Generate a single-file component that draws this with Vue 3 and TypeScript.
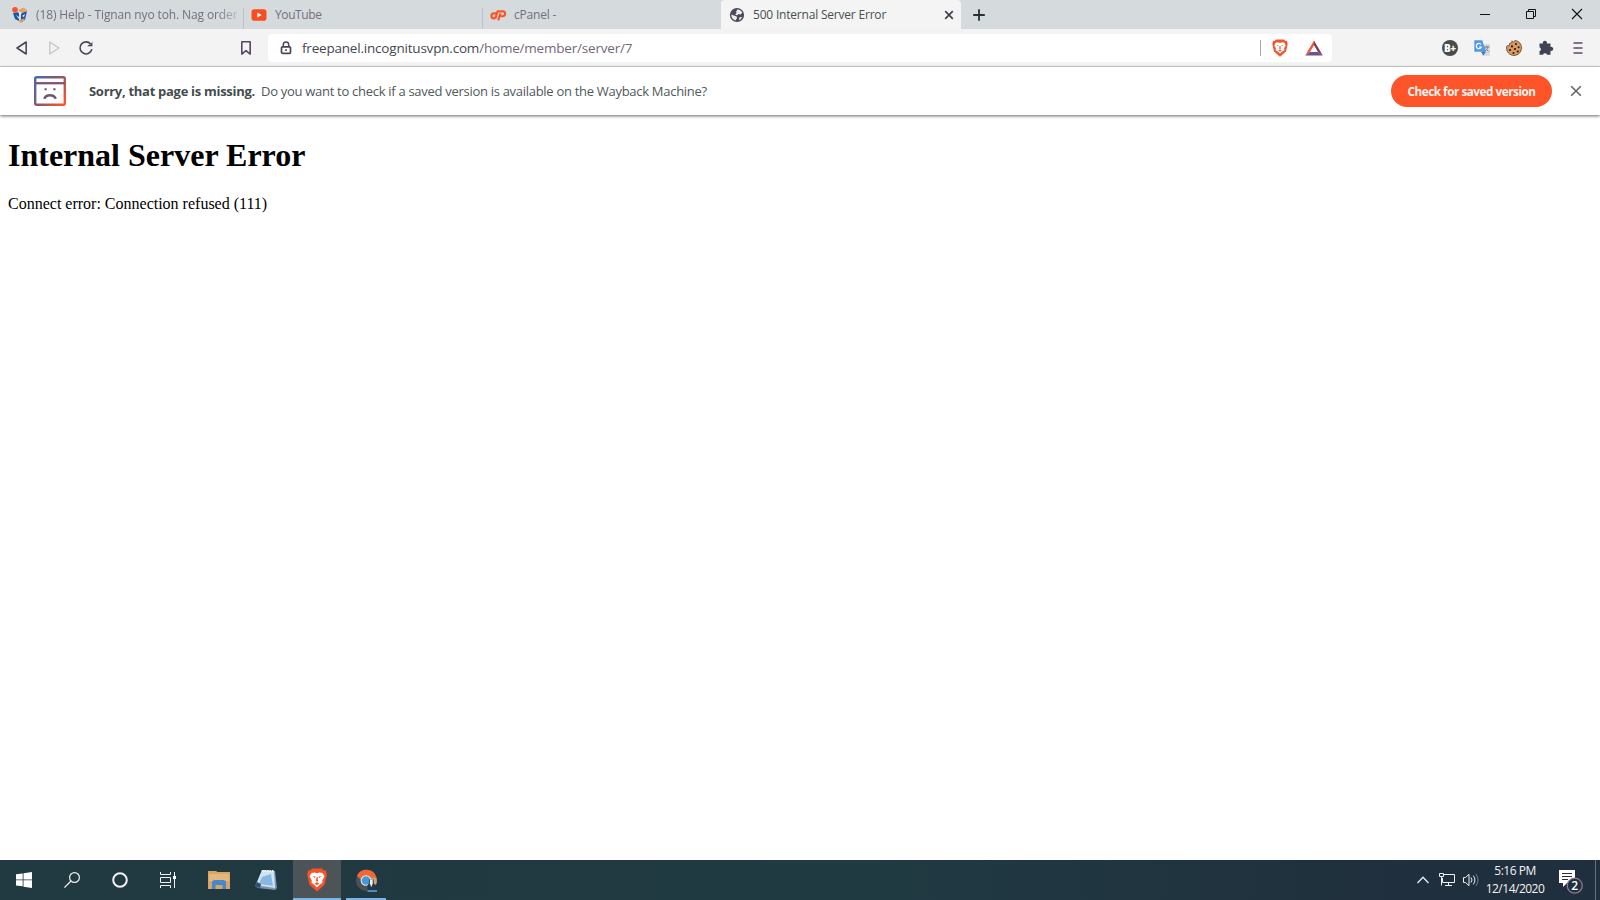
<script setup lang="ts">
import { ref } from "vue";

interface Tab {
    key: string;
    title: string;
    active?: boolean;
}

const tabs = ref<Tab[]>([
    { key: "help", title: "(18) Help - Tignan nyo toh. Nag order" },
    { key: "youtube", title: "YouTube" },
    { key: "cpanel", title: "cPanel -" },
    { key: "error", title: "500 Internal Server Error", active: true },
]);

const host = "freepanel.incognitusvpn.com";
const path = "/home/member/server/7";
</script>

<template>
    <div class="screen">
        <!-- TAB STRIP -->
        <header class="tab-strip">
            <div v-for="tab in tabs" :key="tab.key" class="tab" :class="[tab.key, { active: tab.active }]">
                <svg v-if="tab.key === 'help'" class="favicon" viewBox="0 0 16 16">
                    <path d="M1 6l6-1v9l-4-2zM9 6l6-2-2 9-4 1z" fill="#1c56a8" />
                    <path d="M6 3l6-2.500 3.500 3.500-6 2z" fill="#e9a165" />
                    <path d="M4 8l3 2v2zM10 9l3-2-1 3zM6 5l4 1-2 2z" fill="#f2f5f7" />
                    <path d="M7 13.500l6-2.500-2 4-3 1z" fill="#e39b5e" />
                    <circle cx="3" cy="2.800" r="2.800" fill="#f4552e" />
                </svg>
                <svg v-else-if="tab.key === 'youtube'" class="favicon" viewBox="0 0 16 16">
                    <rect x="0.500" y="2.300" width="15" height="11.400" rx="2.800" fill="#fb4b20" />
                    <path d="M6.400 5.600v4.800L10.600 8z" fill="#fff" />
                </svg>
                <svg v-else-if="tab.key === 'cpanel'" class="favicon" viewBox="0 0 16 16">
                    <path d="M7.200 6.400H3.900a2.500 2.500 0 0 0 0 5h1.300" fill="none" stroke="#fb5526" stroke-width="2.100" />
                    <path d="M5.300 11.600l2.300-7.200h5.100a2.300 2.300 0 0 1 0 4.800h-2.500" fill="none" stroke="#fb5526" stroke-width="2.100" stroke-linejoin="round" />
                    <path d="M8.200 13.300l2.300-7" fill="none" stroke="#fb5526" stroke-width="2.100" />
                </svg>
                <svg v-else class="favicon" viewBox="0 0 16 16">
                    <circle cx="8" cy="8" r="7.100" fill="#51495a" />
                    <path d="M8.500 2.400c2-.2 4 1.300 4.800 3.200l-1.600 2-2.200-.7-1.300 1.400-2-.6 1.300-1.700-.4-1.600zM2.300 7.500l3.200 1.300 2.200.7.3 1.800-1.600 2.200C3.700 12.500 2.200 10.300 2.300 7.500zM10.500 10.300l2.600-.4c-.6 1.600-1.600 2.800-3.200 3.400z" fill="#eeedf0" />
                </svg>
                <span class="tab-title">{{ tab.title }}</span>
                <svg v-if="tab.active" class="tab-close" viewBox="0 0 10 10">
                    <path d="M1.200 1.200l7.600 7.600M8.800 1.200L1.200 8.800" stroke="#444050" stroke-width="1.700" />
                </svg>
            </div>
            <svg class="new-tab" viewBox="0 0 12 12">
                <path d="M6 .2v11.600M.2 6h11.600" stroke="#263238" stroke-width="1.800" />
            </svg>
            <div class="window-controls">
                <svg viewBox="0 0 12 12"><path d="M1 6.500h10" stroke="#111" /></svg>
                <svg viewBox="0 0 12 12">
                    <path d="M1.500 3.500h7v7h-7zM3.500 3.500v-2h7v7h-2" fill="none" stroke="#111" />
                </svg>
                <svg viewBox="0 0 12 12"><path d="M1 1l10 10M11 1L1 11" stroke="#111" stroke-width="1.100" /></svg>
            </div>
        </header>

        <!-- TOOLBAR -->
        <div class="toolbar">
            <div class="nav-buttons">
                <svg viewBox="0 0 16 16">
                    <path d="M12.200 2v12L3 8z" fill="none" stroke="#48434f" stroke-width="1.500" stroke-linejoin="round" />
                </svg>
                <svg viewBox="0 0 16 16">
                    <path d="M3.800 2v12L13 8z" fill="none" stroke="#c4c4c6" stroke-width="1.300" stroke-linejoin="round" />
                </svg>
                <svg viewBox="0 0 16 16">
                    <path d="M12.600 4A6 6 0 1 0 13.900 9.200" fill="none" stroke="#454450" stroke-width="1.600" />
                    <path d="M14.400 1.400v4.900H9.300l1.200-1.300 2.200-.8z" fill="#454450" />
                </svg>
            </div>
            <svg class="bookmark" viewBox="0 0 16 16">
                <path d="M3.800 1.800h8.400v12.300L8 10.700l-4.200 3.400z" fill="none" stroke="#5b466a" stroke-width="1.600" stroke-linejoin="round" />
            </svg>
            <div class="address-bar">
                <svg class="lock" viewBox="0 0 12 14">
                    <path d="M3.300 6V3.700a2.700 2.700 0 0 1 5.400 0V6" fill="none" stroke="#4c4754" stroke-width="1.500" />
                    <rect x="1.500" y="5.800" width="9" height="6.500" rx="1" fill="none" stroke="#4c4754" stroke-width="1.700" />
                    <rect x="5.200" y="8.200" width="1.600" height="1.800" fill="#4c4754" />
                </svg>
                <span class="url">{{ host }}<span class="url-path">{{ path }}</span></span>
                <span class="address-divider"></span>
                <svg class="shield" viewBox="0 0 16 18">
                    <path d="M4 .5h8l1.400 1.400 1.500.1.800 3-1.700 7.500L8 17.700 2 12.500.3 5l.8-3 1.500-.1z" fill="#f2552b" />
                    <path d="M3.600 3.700L6 3.300l2 .7 2-.7 2.400.4 1.300 2.700-1.600 2.800.3 2-2.200 1.400L8 14.500l-2.200-1.900-2.200-1.400.3-2-1.600-2.800z" fill="#fff" />
                    <path d="M4.500 6l2.300.5-.6.8zM11.500 6l-2.300.5.6.8zM7.500 7h1l.3 2.800L8 10.500l-.8-.7zM6 11.800l2-1 2 1-2 .8z" fill="#f2552b" />
                </svg>
                <svg class="bat" viewBox="0 0 18 16">
                    <path d="M9 .4v5.300L5.500 11.800.2 15.500z" fill="#f4552d" />
                    <path d="M9 .4l8.800 15.100-5.300-3.700L9 5.700z" fill="#85395f" />
                    <path d="M.2 15.500l5.300-3.700h7l5.300 3.700z" fill="#6b5488" />
                    <path d="M9 5.300l3.900 6.700H5.100z" fill="#fff" />
                </svg>
            </div>
            <div class="extensions">
                <svg viewBox="0 0 16 16">
                    <circle cx="8" cy="8" r="8" fill="#484c4e" />
                    <text x="2" y="11.600" class="badge-text">B+</text>
                </svg>
                <svg viewBox="0 0 16 16">
                    <path d="M6 4h10v11.800H8z" fill="#d8dadd" />
                    <path d="M.3.300h8l3.600 11.500H.3z" fill="#529be4" />
                    <path d="M7 11.800h5l-2.600 3.800z" fill="#397dc7" />
                    <path d="M7 4.500A2.600 2.600 0 1 0 7.300 7H5" fill="none" stroke="#fff" stroke-width="1.200" />
                    <path d="M10 7h5.200M12.700 5.800V7M14 7c-.5 2-2 3.500-3.500 4.300M11.500 8.500l3 3" fill="none" stroke="#737990" />
                </svg>
                <svg viewBox="0 0 16 16">
                    <path d="M6 .8l1.400 1.400L9 .6c4 .4 6.500 3.300 6.500 7.400A7.500 7.500 0 0 1 .5 8l.3-2 2.500-.6.500-2.200 2-.3z" fill="#d89a60" stroke="#5b4030" stroke-width=".8" />
                    <g fill="#241711">
                        <circle cx="6" cy="6.400" r="1.100" /><circle cx="10" cy="4" r="1" />
                        <circle cx="12.600" cy="7.200" r="1" /><circle cx="9" cy="9" r="1.100" />
                        <circle cx="4" cy="10" r="1.100" /><circle cx="7.500" cy="13" r="1" />
                        <circle cx="11.800" cy="11.500" r="1.100" />
                    </g>
                </svg>
                <svg viewBox="0 0 16 16">
                    <path d="M1.500 3.500h3.400a2.100 2.100 0 1 1 4 0h3.600v3.400a2.100 2.100 0 1 1 0 4v3.900H9a2.100 2.100 0 0 0-4 0H1.500v-3.600a2.100 2.100 0 0 0 0-4z" fill="#3e4552" />
                </svg>
                <svg viewBox="0 0 16 16">
                    <path d="M3.500 3h9M3.500 8h9M3.500 13h9" stroke="#5b4869" stroke-width="1.600" />
                </svg>
            </div>
        </div>

        <!-- WAYBACK BAR -->
        <div class="wayback-bar">
            <svg class="sad-page" viewBox="0 0 32 30">
                <defs>
                    <linearGradient id="sadGradient" x1="0" y1="0" x2="32" y2="24" gradientUnits="userSpaceOnUse">
                        <stop offset="0" stop-color="#3f6fb5" />
                        <stop offset=".5" stop-color="#83596f" />
                        <stop offset="1" stop-color="#fb5529" />
                    </linearGradient>
                </defs>
                <rect x="1.200" y="1.200" width="29.600" height="27.600" rx="1.500" fill="none" stroke="url(#sadGradient)" stroke-width="2.400" />
                <path d="M1 7.200h30" stroke="#7c5578" stroke-width="2.300" />
                <path d="M10.500 13.200h2.200M19.300 13.200h2.200" stroke="#70566d" stroke-width="2" />
                <path d="M10.200 22.800c1.200-2.800 3.300-3.600 5.800-3.600s4.600.8 5.800 3.600" fill="none" stroke="#70566d" stroke-width="2.500" />
            </svg>
            <strong class="wayback-title">Sorry, that page is missing.</strong>
            <span class="wayback-text">Do you want to check if a saved version is available on the Wayback Machine?</span>
            <button class="check-button">Check for saved version</button>
            <svg class="wayback-close" viewBox="0 0 12 12">
                <path d="M1.200 1.200l9.600 9.600M10.800 1.200l-9.600 9.600" stroke="#666569" stroke-width="1.600" />
            </svg>
        </div>

        <!-- PAGE -->
        <main class="page">
            <h1>Internal Server Error</h1>
            <p>Connect error: Connection refused (111)</p>
        </main>

        <!-- TASKBAR -->
        <footer class="taskbar">
            <div class="task start">
                <svg viewBox="0 0 16 16"><path d="M0 2.300l6.700-.9v6H0zM7.500 1.300L16 0v7.400H7.500zM0 8.300h6.700v6L0 13.500zM7.500 8.300H16V16l-8.500-1.300z" fill="#fff" /></svg>
            </div>
            <div class="task">
                <svg viewBox="0 0 16 16">
                    <circle cx="10.500" cy="5.500" r="4.900" fill="none" stroke="#f1eef0" stroke-width="1.200" />
                    <path d="M7 9L.4 15.600" stroke="#f1eef0" stroke-width="1.300" />
                </svg>
            </div>
            <div class="task">
                <svg viewBox="0 0 16 16"><circle cx="8" cy="8" r="6.800" fill="none" stroke="#f4eff5" stroke-width="2" /></svg>
            </div>
            <div class="task">
                <svg viewBox="0 0 16 16">
                    <path d="M.5 0v2.500h10V0M.5 16v-2.500h10V16M.5 5.500h10v5H.5zM14.500 0v16" fill="none" stroke="#eef1f2" />
                    <path d="M13 4h3v3h-3z" fill="#fff" />
                </svg>
            </div>
            <div class="task explorer">
                <svg viewBox="0 0 24 24">
                    <path d="M1 3h8l1.500 1H23v17H1z" fill="#d9a469" />
                    <path d="M2 6h20v7H2z" fill="#e5b77b" />
                    <path d="M5 21v-7.500l2-1.500h10l2 1.500V21h-3.500v-4h-7v4z" fill="#428acb" />
                </svg>
            </div>
            <div class="task notepad">
                <svg viewBox="0 0 24 24">
                    <path d="M8 2l13 1 2 17-2 2-17-2-3-2z" fill="#8194ae" />
                    <path d="M8 2l12 1 1 17L2 17z" fill="#d0e3f2" />
                    <path d="M8 9l9-3 2 12-14-2z" fill="#86b8e1" />
                    <path d="M8 3h12" stroke="#f4f5f5" stroke-width="2" stroke-dasharray="1.500 1" />
                    <path d="M3 14l4 2-1 4-5-2z" fill="#294e77" />
                </svg>
            </div>
            <div class="task brave">
                <svg viewBox="0 0 20 24">
                    <path d="M5 .5h10l1.800 2 2-.2 1 4.200-2.300 10.200-7.500 6.800-7.500-6.800L.2 6.500l1-4.200 2 .2z" fill="#f85227" />
                    <path d="M4.500 5l3-.5L10 5.300l2.500-.8 3 .5 2 3.300-2.200 3.900.2 2.600-2.500 1.800-3 2.900-3-2.900-2.500-1.800.2-2.600-2.200-3.900z" fill="#fff" />
                    <path d="M5.500 8l3.200.7-1 1.300zM14.500 8l-3.200.7 1 1.300zM9.500 9h1l.5 4-1 1-1-1zM7.500 15.700l2.500-1.400 2.500 1.400-2.500 1.200z" fill="#ef542c" />
                </svg>
            </div>
            <div class="task chrome">
                <svg viewBox="0 0 24 24">
                    <circle cx="12" cy="12" r="11" fill="#4c5157" />
                    <path d="M2 7a11 11 0 0 1 20.500 2L12 10.500 7 12z" fill="#f06835" />
                    <path d="M13 9l9.500.2a11 11 0 0 1-6.500 13z" fill="#d2a275" />
                    <circle cx="11.500" cy="12" r="5.600" fill="#e7edf1" />
                    <circle cx="11.500" cy="12" r="4.500" fill="#4497db" />
                    <path d="M13 23v-6l1.500-2v-4h5v4l2.500 2v6z" fill="#25394b" />
                    <path d="M15.500 11h3v4l-1.500 4-1.500-4z" fill="#edf3f4" />
                    <path d="M13 23h10" stroke="#5ab2ec" stroke-width="1.500" />
                </svg>
            </div>
            <div class="tray">
                <svg class="chevron" viewBox="0 0 12 8"><path d="M.5 7L6 1.300 11.500 7" fill="none" stroke="#f0eef1" stroke-width="1.300" /></svg>
                <svg class="network" viewBox="0 0 16 16">
                    <path d="M5 2.500h10.500v8H3.500V6M9.500 10.500v3M6 13.500h7M.5 1.500h4v3h-4zM2.500 4.500v9" fill="none" stroke="#eef0f2" />
                </svg>
                <svg class="volume" viewBox="0 0 17 16">
                    <path d="M.5 5.500h2L6 2.300v11.400L2.500 10.500h-2z" fill="none" stroke="#eef0f2" />
                    <path d="M8 5.500q2 2.500 0 5M10.300 3.700q3.200 4.300 0 8.600" fill="none" stroke="#eef0f2" />
                    <path d="M12.800 2q4.500 6 0 12" fill="none" stroke="#6c7b85" />
                </svg>
                <div class="clock">
                    <span class="time">5:16 PM</span>
                    <span class="date">12/14/2020</span>
                </div>
                <svg class="notifications" viewBox="0 0 26 26">
                    <path d="M1 1h16v13H9l-4 4v-4H1z" fill="#fff" />
                    <path d="M4 4.500h10M4 7.500h10M4 10.500h6" stroke="#20303d" />
                    <circle cx="16.700" cy="16.700" r="7.500" fill="#20303d" stroke="#8b7793" stroke-width="1.300" />
                    <text x="13.300" y="21" class="count">2</text>
                </svg>
                <span class="show-desktop"></span>
            </div>
        </footer>
    </div>
</template>

<style>
body {
    margin: 0;
    overflow: hidden;
}
</style>

<style scoped>
.screen {
    width: 1600px;
    height: 900px;
    display: flex;
    flex-direction: column;
    background: #fff;
    font-family: "Open Sans", "Noto Sans", sans-serif;
}

svg {
    display: block;
    flex: none;
    overflow: visible;
}

.tab-strip {
    height: 29px;
    display: flex;
    flex: none;
    background: #d5dadd;
}

.tab {
    box-sizing: border-box;
    width: 239px;
    height: 29px;
    padding: 0 11px 0 7px;
    display: flex;
    flex: none;
    align-items: center;
    border-right: 1px solid transparent;
    background: linear-gradient(#bcc3c7, #bcc3c7) right 8px / 1px 21px no-repeat border-box;
    color: #746f82;
}

.tab.help {
    width: 244px;
    padding: 0 6px 0 12px;
}

.tab.cpanel {
    width: 238px;
    background: none;
}

.tab.active {
    width: 240px;
    padding: 0 6px 0 8px;
    background: #f4f4f4;
    border-radius: 4px 4px 0 0;
    color: #465052;
}

.favicon {
    width: 16px;
    height: 16px;
}

.tab-title {
    flex: 1;
    margin-left: 8px;
    white-space: nowrap;
    font-size: 12px;
    line-height: 20px;
    letter-spacing: -0.2px;
}

.help .tab-title {
    letter-spacing: -0.12px;
    mask-image: linear-gradient(90deg, #000 90%, rgba(0, 0, 0, 0.3));
}

.youtube .tab-title {
    letter-spacing: -0.4px;
}

.tab-close {
    width: 10px;
    height: 10px;
}

.new-tab {
    width: 12px;
    height: 12px;
    margin: 9px 0 0 12px;
}

.window-controls {
    display: flex;
    gap: 34px;
    margin: 8px 17px 0 auto;
}

.window-controls svg {
    width: 12px;
    height: 12px;
}

.toolbar {
    height: 38px;
    box-sizing: border-box;
    display: flex;
    flex: none;
    align-items: center;
    background: #f3f3f3;
    border-bottom: 1px solid #d3d3d4;
}

.nav-buttons {
    display: flex;
    gap: 16px;
    padding-left: 14px;
}

.nav-buttons svg,
.bookmark,
.extensions svg {
    width: 16px;
    height: 16px;
}

.bookmark {
    margin-left: 144px;
}

.address-bar {
    box-sizing: border-box;
    width: 1064px;
    height: 28px;
    margin-left: 14px;
    padding: 0 9px 0 12px;
    display: flex;
    align-items: center;
    background: #fff;
    border-radius: 4px;
}

.lock {
    width: 12px;
    height: 14px;
}

.url {
    flex: 1;
    margin-left: 10px;
    white-space: nowrap;
    font-size: 13.5px;
    line-height: 20px;
    letter-spacing: -0.2px;
    color: #444850;
}

.url-path {
    color: #74677a;
}

.address-divider {
    width: 1px;
    height: 16px;
    background: #a8a5ac;
}

.shield {
    width: 16px;
    height: 18px;
    margin-left: 11px;
}

.bat {
    width: 18px;
    height: 16px;
    margin-left: 17px;
}

.extensions {
    display: flex;
    gap: 16px;
    margin: 0 14px 0 auto;
}

.badge-text {
    fill: #fff;
    font-size: 10px;
    font-weight: 800;
    letter-spacing: -0.5px;
}

.wayback-bar {
    height: 48px;
    display: flex;
    flex: none;
    align-items: center;
    background: #fff;
    box-shadow: 0 1px 3px #666;
    white-space: nowrap;
    color: #50595b;
    font-size: 13px;
    line-height: 20px;
}

.sad-page {
    width: 32px;
    height: 30px;
    margin-left: 34px;
}

.wayback-title {
    margin-left: 23px;
    width: 172px;
    color: #434c4d;
    letter-spacing: -0.29px;
}

.wayback-text {
    letter-spacing: -0.29px;
}

.check-button {
    width: 161px;
    height: 32px;
    margin-left: auto;
    padding: 0;
    border: 0;
    border-radius: 16px;
    background: #fd5429;
    color: #fff4ed;
    font: 700 11.7px/20px "Open Sans", sans-serif;
    letter-spacing: -0.45px;
}

.wayback-close {
    width: 12px;
    height: 12px;
    margin: 0 18px;
}

.page {
    flex: 1;
    padding: 0 8px;
    font-family: "Liberation Serif", serif;
    color: #000;
}

.page h1 {
    margin: 22px 0 21px;
    font-size: 32px;
    line-height: 37px;
}

.page p {
    margin: 0;
    font-size: 16px;
    line-height: 18px;
}

.taskbar {
    height: 40px;
    display: flex;
    flex: none;
    background: linear-gradient(90deg, #213940, #203a42 55%, #202f3d 88%);
}

.task {
    width: 48px;
    height: 40px;
    display: flex;
    align-items: center;
    justify-content: center;
}

.task svg {
    width: 16px;
    height: 16px;
}

.task.explorer,
.task.notepad {
    width: 49px;
}

.task.explorer {
    margin-left: 2px;
}

.task.explorer svg,
.task.notepad svg {
    width: 24px;
    height: 24px;
}

.task.notepad svg {
    margin-right: 3px;
}

.task.brave {
    box-sizing: border-box;
    background: #4c5458;
    border-bottom: 2px solid #79b5e9;
    margin-left: 1px;
}

.task.brave svg {
    width: 20px;
    height: 24px;
    margin-top: 2px;
}

.task.chrome {
    box-sizing: border-box;
    width: 40px;
    margin-left: 5px;
    border-bottom: 2px solid #79b5e9;
}

.task.chrome svg {
    width: 23px;
    height: 23px;
    margin-top: 2px;
}

.tray {
    display: flex;
    align-items: center;
    margin-left: auto;
}

.chevron {
    width: 12px;
    height: 8px;
}

.network {
    width: 16px;
    height: 16px;
    margin-left: 10px;
}

.volume {
    width: 17px;
    height: 16px;
    margin-left: 8px;
}

.clock {
    width: 70px;
    padding-right: 2px;
    display: flex;
    flex-direction: column;
    align-items: center;
    color: #f5f3f5;
    font-size: 12px;
    line-height: 18px;
    letter-spacing: -0.5px;
}

.notifications {
    width: 26px;
    height: 26px;
    margin: 4px 0 0 6px;
}

.count {
    fill: #fff;
    font-size: 12px;
    font-weight: 600;
}

.show-desktop {
    width: 4px;
    height: 40px;
    margin-left: 11px;
    border-left: 1px solid #66717c;
}
</style>
